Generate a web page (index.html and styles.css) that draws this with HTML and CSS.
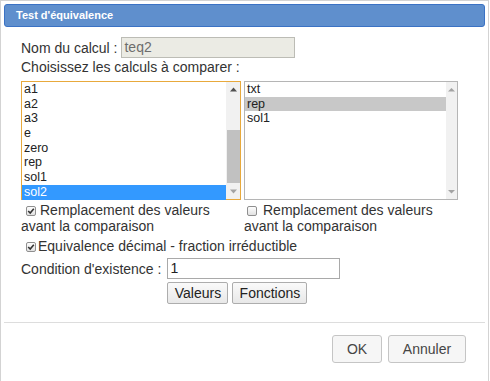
FILE: index.html
```html
<!DOCTYPE html>
<html lang="fr">
<head>
<meta charset="utf-8">
<title>Test d'équivalence</title>
<link rel="stylesheet" href="styles.css">
</head>
<body>
<div class="dialog">
  <div class="titlebar">Test d'équivalence</div>
  <div class="content">
    <div class="row-name">
      <span class="label">Nom du calcul :</span>
      <span class="field disabled">teq2</span>
    </div>
    <div class="line">Choisissez les calculs à comparer :</div>
    <div class="lists">
      <div class="listbox focused">
        <div class="items">
          <div class="item">a1</div>
          <div class="item">a2</div>
          <div class="item">a3</div>
          <div class="item">e</div>
          <div class="item">zero</div>
          <div class="item">rep</div>
          <div class="item">sol1</div>
          <div class="item sel-blue">sol2</div>
        </div>
        <div class="scrollbar">
          <svg class="arrow" width="15" height="15" viewBox="0 0 15 15"><path d="M4 9.5 L7.5 5.5 L11 9.5 Z" fill="#505050"/></svg>
          <div class="track"><div class="thumb"></div></div>
          <svg class="arrow" width="15" height="15" viewBox="0 0 15 15"><path d="M4 5.5 L7.5 9.5 L11 5.5 Z" fill="#a3a3a3"/></svg>
        </div>
      </div>
      <div class="listbox right">
        <div class="items">
          <div class="item">txt</div>
          <div class="item sel-gray">rep</div>
          <div class="item">sol1</div>
        </div>
        <div class="scrollbar">
          <svg class="arrow" width="11" height="15" viewBox="0 0 11 15"><path d="M2 9.5 L5.5 6 L9 9.5 Z" fill="#a3a3a3"/></svg>
          <div class="track"></div>
          <svg class="arrow" width="11" height="15" viewBox="0 0 11 15"><path d="M2 6 L5.5 9.5 L9 6 Z" fill="#a3a3a3"/></svg>
        </div>
      </div>
    </div>
    <div class="checks">
      <div class="check-col left">
        <span class="cb checked"><svg width="10" height="10" viewBox="0 0 10 10"><path d="M2.2 5 L4.2 7 L7.8 2.8" fill="none" stroke="#333" stroke-width="1.6"/></svg></span>Remplacement des valeurs avant la comparaison
      </div>
      <div class="check-col right">
        <span class="cb"></span>Remplacement des valeurs avant la comparaison
      </div>
    </div>
    <div class="line equiv">
      <span class="cb checked"><svg width="10" height="10" viewBox="0 0 10 10"><path d="M2.2 5 L4.2 7 L7.8 2.8" fill="none" stroke="#333" stroke-width="1.6"/></svg></span>Equivalence décimal - fraction irréductible
    </div>
    <div class="cond-grid">
      <span class="label">Condition d'existence :</span>
      <span class="field cond">1</span>
      <span></span>
      <div class="small-buttons">
        <button class="btn small">Valeurs</button>
        <button class="btn small">Fonctions</button>
      </div>
    </div>
  </div>
  <div class="buttonpane">
    <button class="btn big ok">OK</button>
    <button class="btn big cancel">Annuler</button>
  </div>
</div>
</body>
</html>
```
FILE: styles.css
```css
* { box-sizing: border-box; }
html, body { margin: 0; padding: 0; background: #fff; }
body {
  font-family: "Liberation Sans", Arial, sans-serif;
  font-size: 14px;
  color: #333;
}
.dialog {
  width: 489px;
  height: 395px;
  border: 1px solid #d3d3d3;
  padding: 3px;
  background: #fff;
}
.titlebar {
  height: 23px;
  border: 1px solid #3b72c4;
  border-radius: 3px;
  background: #5f8fcd;
  color: #fff;
  font-weight: bold;
  font-size: 11px;
  line-height: 21px;
  padding-left: 11px;
}
.content {
  padding: 0 0 0 17px;
}
.row-name {
  margin-top: 10px;
  display: flex;
  align-items: center;
  height: 21px;
}
.label { white-space: nowrap; }
.field {
  display: block;
  height: 21px;
  border: 1px solid #a9a9a9;
  padding-left: 2px;
  line-height: 19px;
  font-size: 14px;
}
.row-name .field {
  width: 174px;
  margin-left: 4px;
}
.field.disabled {
  background: #ebebe4;
  color: #6d6d6d;
  border-color: #bcbcb5;
}
.line {
  line-height: 16px;
  height: 16px;
  margin-top: 1px;
}
.lists {
  margin-top: 6px;
  display: flex;
  gap: 3px;
}
.listbox {
  height: 119px;
  border: 1px solid #a9a9a9;
  display: flex;
  background: #fff;
}
.listbox.focused {
  width: 220px;
  border-color: #e8a93c;
}
.listbox.right {
  width: 214px;
  border-color: #b5b5b5;
}
.items {
  flex: 1;
  font-size: 12.5px;
  color: #222;
}
.item {
  height: 14.7px;
  line-height: 14.7px;
  padding-left: 2px;
  white-space: nowrap;
}
.sel-blue { background: #3399ff; color: #fff; }
.sel-gray { background: #c8c8c8; }
.scrollbar {
  width: 14px;
  background: #f1f1f1;
  display: flex;
  flex-direction: column;
}
.listbox.right .scrollbar { width: 11px; }
.arrow { display: block; flex: none; }
.track {
  flex: 1;
  position: relative;
}
.thumb {
  position: absolute;
  left: 1px;
  right: 0;
  top: 33px;
  height: 53px;
  background: #c1c1c1;
}
.checks {
  margin-top: 2px;
  display: flex;
  gap: 3px;
}
.check-col {
  line-height: 16px;
}
.check-col.left { width: 220px; }
.check-col.right { width: 214px; }
.cb {
  display: inline-block;
  width: 10px;
  height: 10px;
  border: 1px solid #8f8f8f;
  border-radius: 2px;
  background: linear-gradient(#fdfdfd, #e2e2e2);
  margin: 0 4px 0 5px;
  vertical-align: -1px;
  position: relative;
}
.check-col.right .cb { margin-left: 3px; margin-right: 6px; }
.cb svg {
  position: absolute;
  left: -1px;
  top: -1px;
}
.equiv {
  margin-top: 4px;
}
.equiv .cb { margin-right: 2px; }
.cond-grid {
  margin-top: 4px;
  display: grid;
  grid-template-columns: auto 1fr;
  column-gap: 6px;
  align-items: center;
}
.field.cond {
  width: 173px;
  border-color: #a9a9a9;
  color: #222;
}
.small-buttons {
  margin-top: 3px;
  display: flex;
  gap: 4px;
}
.btn {
  font-family: "Liberation Sans", Arial, sans-serif;
  border: 1px solid #c5c5c5;
  background: #f6f6f6;
  color: #454545;
  border-radius: 3px;
  padding: 0;
  margin: 0;
}
.btn.small {
  height: 22px;
  font-size: 14px;
  color: #222;
  border-color: #adadad;
  border-radius: 2px;
  background: linear-gradient(#fafafa, #e8e8e8);
}
.btn.small:first-child { width: 61px; }
.btn.small:last-child { width: 75px; }
.buttonpane {
  margin-top: 18px;
  border-top: 1px solid #dddddd;
  padding-top: 12px;
  padding-right: 19px;
  display: flex;
  justify-content: flex-end;
  gap: 6px;
}
.btn.big {
  height: 28px;
  font-size: 14px;
}
.btn.ok { width: 50px; }
.btn.cancel { width: 78px; }
```
